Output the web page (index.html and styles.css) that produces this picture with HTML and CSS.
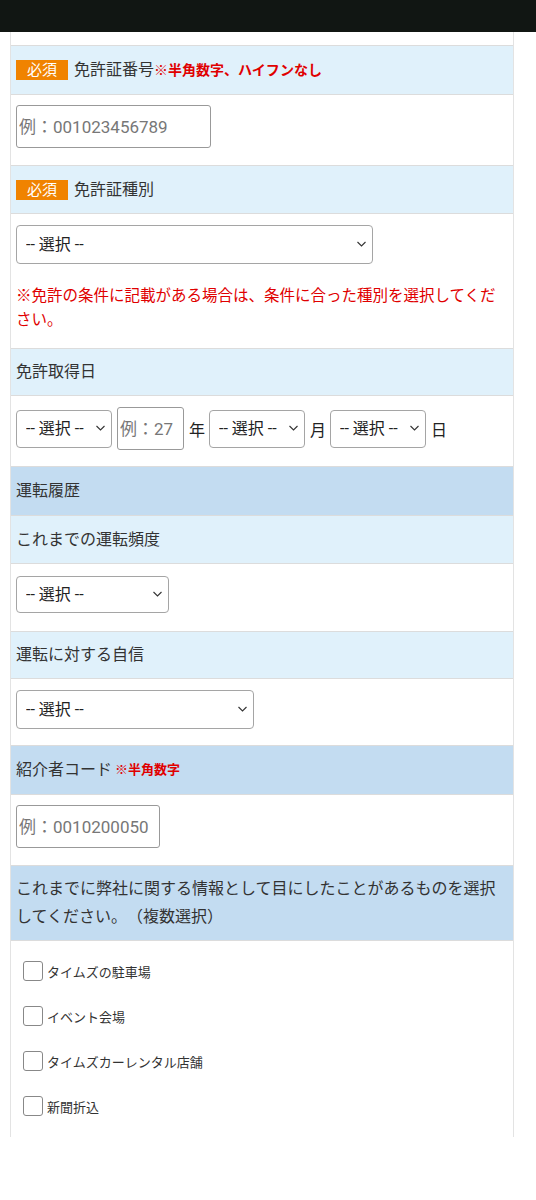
FILE: index.html
```html
<!DOCTYPE html>
<html lang="ja">
<head>
<meta charset="UTF-8">
<meta name="viewport" content="width=device-width, initial-scale=1.0">
<title>会員登録</title>
<link rel="stylesheet" href="styles.css">
</head>
<body>

<div class="topbar"></div>

<div class="container">
<div class="row spacer"></div>

<div class="row head badge-head">
<span class="required">必須</span>免許証番号<span class="note">※半角数字、ハイフンなし</span>
</div>
<div class="row field input-field">
<input type="text" class="text-input wide" placeholder="例：001023456789">
</div>

<div class="row head">
<span class="required">必須</span>免許証種別
</div>
<div class="row field">
<span class="select-wrap" style="width: 357px">
<select class="select"><option>-- 選択 --</option></select>
<svg class="chevron" viewBox="0 0 10 6"><path d="M1 1l4 4 4-4"/></svg>
</span>
<p class="warning">※免許の条件に記載がある場合は、条件に合った種別を選択してください。</p>
</div>

<div class="row head short-head">免許取得日</div>
<div class="row field date-row">
<span class="select-wrap small">
<select class="select"><option>-- 選択 --</option></select>
<svg class="chevron" viewBox="0 0 10 6"><path d="M1 1l4 4 4-4"/></svg>
</span>
<input type="text" class="text-input year" placeholder="例：27">
<span class="unit">年</span>
<span class="select-wrap small">
<select class="select"><option>-- 選択 --</option></select>
<svg class="chevron" viewBox="0 0 10 6"><path d="M1 1l4 4 4-4"/></svg>
</span>
<span class="unit">月</span>
<span class="select-wrap small">
<select class="select"><option>-- 選択 --</option></select>
<svg class="chevron" viewBox="0 0 10 6"><path d="M1 1l4 4 4-4"/></svg>
</span>
<span class="unit">日</span>
</div>

<div class="row head section">運転履歴</div>

<div class="row head">これまでの運転頻度</div>
<div class="row field freq-field">
<span class="select-wrap" style="width: 153px">
<select class="select short"><option>-- 選択 --</option></select>
<svg class="chevron" viewBox="0 0 10 6"><path d="M1 1l4 4 4-4"/></svg>
</span>
</div>

<div class="row head short-head">運転に対する自信</div>
<div class="row field">
<span class="select-wrap" style="width: 238px">
<select class="select"><option>-- 選択 --</option></select>
<svg class="chevron" viewBox="0 0 10 6"><path d="M1 1l4 4 4-4"/></svg>
</span>
</div>

<div class="row head section">紹介者コード <span class="note small-note">※半角数字</span></div>
<div class="row field input-field">
<input type="text" class="text-input code" placeholder="例：0010200050">
</div>

<div class="row head section multi">これまでに弊社に関する情報として目にしたことがあるものを選択してください。（複数選択）</div>
<div class="row checks">
<label class="check"><input type="checkbox"><span class="box"></span>タイムズの駐車場</label>
<label class="check"><input type="checkbox"><span class="box"></span>イベント会場</label>
<label class="check"><input type="checkbox"><span class="box"></span>タイムズカーレンタル店舗</label>
<label class="check"><input type="checkbox"><span class="box"></span>新聞折込</label>
</div>
</div>

</body>
</html>
```

FILE: styles.css
```css
body {
    font-family: Roboto, "Noto Sans CJK JP", sans-serif;
    background-color: #fff;
    color: #333;
    margin: 0;
    padding: 0;
    text-spacing-trim: space-all;
}

.topbar {
    height: 32px;
    background-color: #111613;
}

.container {
    width: 502px;
    margin-left: 10px;
    border-left: 1px solid #e3e3e3;
    border-right: 1px solid #e3e3e3;
    height: 1105px;
    overflow: hidden;
}

.row {
    border-top: 1px solid #dcdcdc;
    padding: 0 5px;
}

.row:first-child {
    border-top: none;
}

.spacer {
    height: 13px;
}

.head {
    background-color: #e0f1fb;
    font-size: 16px;
    line-height: 24px;
    height: 48px;
    box-sizing: border-box;
    display: flex;
    align-items: center;
}

.head.badge-head,
.head.section {
    height: 49px;
}

.head.short-head {
    height: 47px;
}

.head.section {
    background-color: #c3dcf1;
}

.head.multi {
    display: block;
    height: auto;
    line-height: 28px;
    padding-top: 9px;
    padding-bottom: 9px;
}

.required {
    display: inline-block;
    width: 52px;
    height: 20px;
    line-height: 20px;
    margin-right: 6px;
    background-color: #f08300;
    color: #fff;
    font-size: 15px;
    text-align: center;
}

.note {
    color: #e00000;
    font-size: 14px;
    font-weight: bold;
}

.small-note {
    font-size: 13px;
    margin-left: 3px;
}

.field {
    padding-top: 11px;
    padding-bottom: 16px;
}

.input-field {
    padding-top: 10px;
    padding-bottom: 17px;
}

.freq-field {
    padding-top: 12px;
    padding-bottom: 18px;
}

.text-input {
    display: block;
    height: 43px;
    box-sizing: border-box;
    border: 1px solid #999;
    border-radius: 3px;
    padding: 0 2px;
    font-family: Roboto, "Noto Sans CJK JP", sans-serif;
    font-size: 17px;
    color: #333;
}

.text-input::placeholder {
    color: #777;
}

.wide {
    width: 195px;
}

.code {
    width: 144px;
}

.year {
    width: 67px;
}

.select-wrap {
    position: relative;
    display: block;
}

.select {
    appearance: none;
    -webkit-appearance: none;
    display: block;
    width: 100%;
    height: 39px;
    box-sizing: border-box;
    border: 1px solid #a5a5a5;
    border-radius: 4px;
    background-color: #fff;
    padding: 0 9px;
    font-family: Roboto, "Noto Sans CJK JP", sans-serif;
    font-size: 16px;
    color: #222;
}

.select.short {
    height: 37px;
}

.chevron {
    position: absolute;
    right: 6px;
    top: 50%;
    width: 11px;
    height: 6px;
    margin-top: -4px;
    fill: none;
    stroke: #333;
    stroke-width: 1.1;
    pointer-events: none;
}

.warning {
    margin: 20px 0 0;
    color: #e00000;
    font-size: 15.5px;
    line-height: 24px;
}

.date-row {
    display: flex;
    align-items: center;
    gap: 4px;
}

.date-row .small {
    width: 96px;
}

.date-row .select {
    height: 38px;
}

.date-row .select-wrap + .text-input {
    margin-left: 1px;
}

.unit {
    font-size: 16px;
    color: #222;
    margin-left: 1px;
}

.checks {
    padding: 20px 12px;
    display: flex;
    flex-direction: column;
    gap: 25px;
}

.check {
    display: flex;
    align-items: center;
    height: 20px;
    font-size: 13px;
    color: #333;
}

.check input {
    display: none;
}

.check .box {
    width: 18px;
    height: 18px;
    border: 1px solid #888;
    border-radius: 3px;
    margin-right: 4px;
}
```
